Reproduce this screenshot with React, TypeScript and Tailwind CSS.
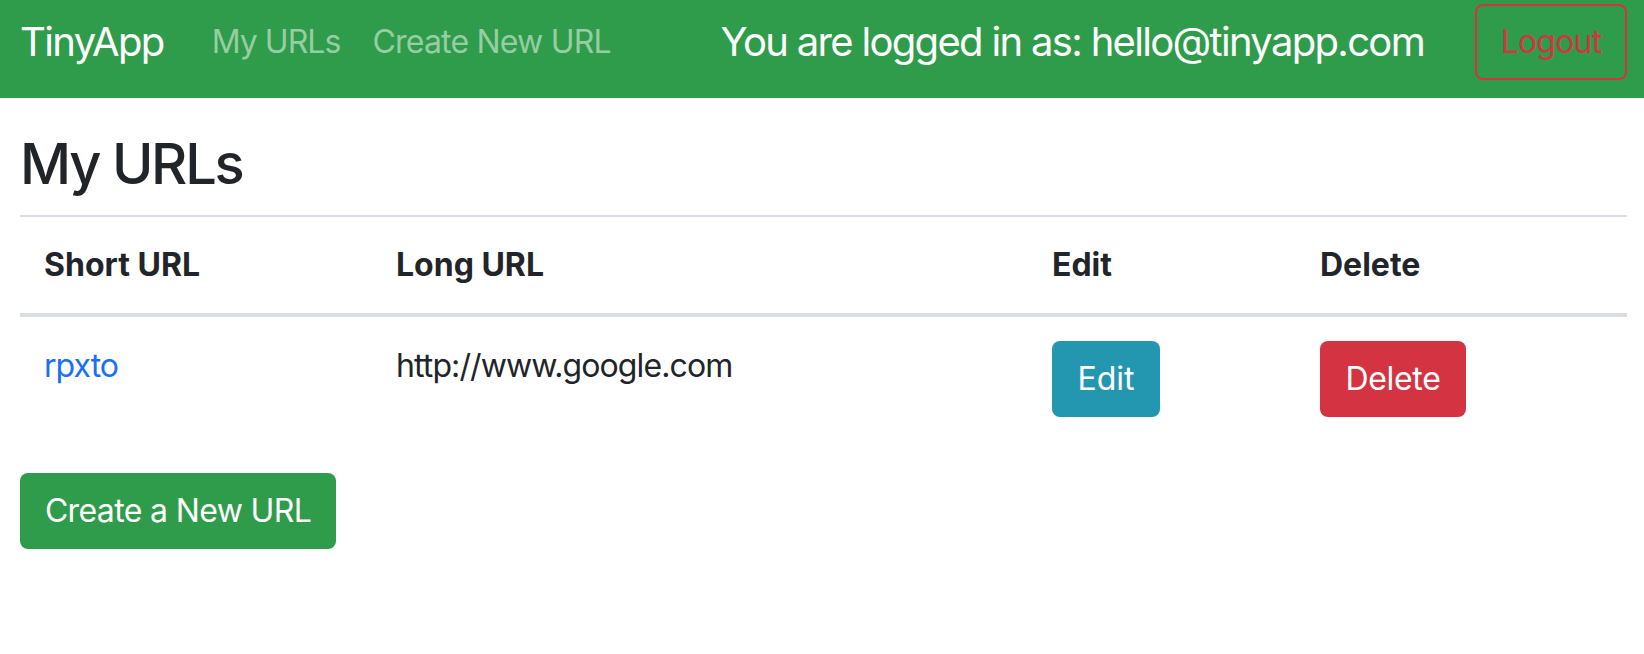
import React from "react";

export default function App() {
  return (
    <div className="min-h-[654px] bg-white text-[#212529]" style={{ fontFamily: "Inter, 'Noto Sans', sans-serif" }}>
      <nav className="h-[98px] bg-[#2e9c4a] flex items-start pl-[20px] pr-[17px] whitespace-nowrap">
        <a className="mt-[12px] text-[40px] leading-[60px] tracking-[-0.04em] text-white mr-[32px]">TinyApp</a>
        <a className="mt-[18px] px-[16px] text-[32px] leading-[48px] tracking-[-0.03em] text-[#97cda4]">My URLs</a>
        <a className="mt-[18px] px-[16px] text-[32px] leading-[48px] tracking-[-0.025em] text-[#97cda4]">Create New URL</a>
        <div className="ml-auto flex items-start">
          <span className="mt-[12px] text-[40px] leading-[60px] tracking-[-0.042em] text-white mr-[51px]">
            You are logged in as: hello@tinyapp.com
          </span>
          <button className="mt-[4px] h-[76px] w-[152px] border-2 border-[#d43441] rounded-[8px] text-[32px] leading-[48px] tracking-[-0.025em] text-[#d43441]">
            Logout
          </button>
        </div>
      </nav>
      <main className="pl-[20px] pr-[17px]">
        <h1 className="mt-[33px] mb-[17px] text-[56px] leading-[67px] font-medium tracking-[-0.04em]">My URLs</h1>
        <table className="w-full table-fixed border-collapse text-[32px] leading-[48px]">
          <colgroup>
            <col className="w-[352px]" />
            <col className="w-[656px]" />
            <col className="w-[268px]" />
            <col />
          </colgroup>
          <thead>
            <tr>
              <th className="text-left font-bold p-[24px] border-t-2 border-b-4 border-[#d9dee2]">Short URL</th>
              <th className="text-left font-bold p-[24px] border-t-2 border-b-4 border-[#d9dee2]">Long URL</th>
              <th className="text-left font-bold p-[24px] border-t-2 border-b-4 border-[#d9dee2]">Edit</th>
              <th className="text-left font-bold p-[24px] border-t-2 border-b-4 border-[#d9dee2]">Delete</th>
            </tr>
          </thead>
          <tbody>
            <tr>
              <td className="p-[24px] align-top">
                <a className="block pt-[1px] text-[#1a6ff5] tracking-[-0.03em]">rpxto</a>
              </td>
              <td className="p-[24px] align-top">
                <span className="block pt-[1px] tracking-[-0.028em]">http://www.google.com</span>
              </td>
              <td className="p-[24px] align-top">
                <button className="h-[76px] w-[108px] rounded-[8px] bg-[#2497b0] text-white text-[32px] leading-[48px]">Edit</button>
              </td>
              <td className="p-[24px] align-top">
                <button className="h-[76px] w-[146px] rounded-[8px] bg-[#d43441] text-white text-[32px] leading-[48px] tracking-[-0.01em]">Delete</button>
              </td>
            </tr>
          </tbody>
        </table>
        <button className="mt-[32px] h-[76px] w-[316px] rounded-[8px] bg-[#2e9c4a] text-white text-[32px] leading-[48px] tracking-[-0.02em]">
          Create a New URL
        </button>
      </main>
    </div>
  );
}
